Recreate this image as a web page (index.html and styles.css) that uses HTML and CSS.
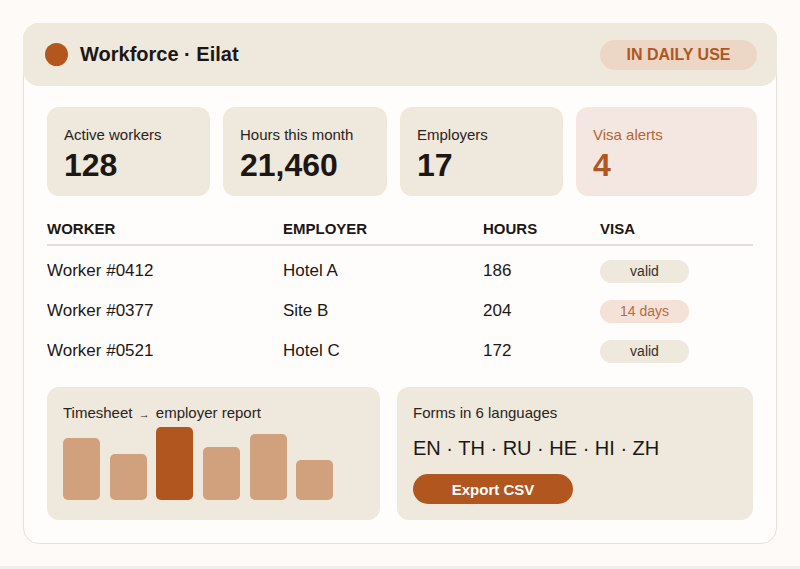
FILE: index.html
```html
<!DOCTYPE html>
<html lang="en">
<head>
    <meta charset="UTF-8">
    <meta name="viewport" content="width=device-width, initial-scale=1.0">
    <title>Workforce · Eilat</title>
    <link rel="stylesheet" href="styles.css">
</head>
<body>
    <div class="card">
        <div class="header">
            <span class="dot"></span>
            <h1>Workforce · Eilat</h1>
            <span class="badge">IN DAILY USE</span>
        </div>

        <div class="content">
            <div class="stats">
                <div class="stat">
                    <div class="stat-label">Active workers</div>
                    <div class="stat-value">128</div>
                </div>
                <div class="stat">
                    <div class="stat-label">Hours this month</div>
                    <div class="stat-value">21,460</div>
                </div>
                <div class="stat">
                    <div class="stat-label">Employers</div>
                    <div class="stat-value">17</div>
                </div>
                <div class="stat alert">
                    <div class="stat-label">Visa alerts</div>
                    <div class="stat-value">4</div>
                </div>
            </div>

            <div class="table">
                <div class="row head">
                    <span>Worker</span>
                    <span>Employer</span>
                    <span>Hours</span>
                    <span>Visa</span>
                </div>
                <div class="rows">
                    <div class="row">
                        <span>Worker #0412</span>
                        <span>Hotel A</span>
                        <span>186</span>
                        <span><span class="pill">valid</span></span>
                    </div>
                    <div class="row">
                        <span>Worker #0377</span>
                        <span>Site B</span>
                        <span>204</span>
                        <span><span class="pill warn">14 days</span></span>
                    </div>
                    <div class="row">
                        <span>Worker #0521</span>
                        <span>Hotel C</span>
                        <span>172</span>
                        <span><span class="pill">valid</span></span>
                    </div>
                </div>
            </div>

            <div class="panels">
                <div class="panel">
                    <div class="panel-title">Timesheet <span class="arrow">→</span> employer report</div>
                    <div class="bars">
                        <div class="bar" style="height: 62px"></div>
                        <div class="bar" style="height: 46px"></div>
                        <div class="bar active" style="height: 73px"></div>
                        <div class="bar" style="height: 53px"></div>
                        <div class="bar" style="height: 66px"></div>
                        <div class="bar" style="height: 40px"></div>
                    </div>
                </div>
                <div class="panel">
                    <div class="panel-title">Forms in 6 languages</div>
                    <div class="langs">EN · TH · RU · HE · HI · ZH</div>
                    <button class="export">Export CSV</button>
                </div>
            </div>
        </div>
    </div>
</body>
</html>
```

FILE: styles.css
```css
html {
    background: #f1eeeb;
}
body {
    font-family: 'Liberation Sans', Arial, sans-serif;
    background: #fdfaf7;
    color: #1c1714;
    margin: 0;
    padding: 23px 23px 0;
    height: 566px;
    box-sizing: border-box;
}
.card {
    background: #fffdfb;
    border: 1px solid #e6e0da;
    border-radius: 16px;
}
.header {
    display: flex;
    align-items: center;
    height: 63px;
    margin: -1px -1px 0;
    padding: 0 20px 0 22px;
    background: #efe8dd;
    border-radius: 16px;
}
.dot {
    width: 23px;
    height: 23px;
    border-radius: 50%;
    background: #b3571e;
    margin-right: 12px;
}
.header h1 {
    font-size: 20px;
    font-weight: bold;
    margin: 0;
    flex: 1;
}
.badge {
    width: 157px;
    height: 30px;
    line-height: 30px;
    text-align: center;
    border-radius: 15px;
    background: #ecd6c6;
    color: #b0561e;
    font-size: 16px;
    font-weight: bold;
}
.content {
    padding: 21px 23px 23px;
}
.stats {
    display: grid;
    grid-template-columns: 163fr 164fr 163fr 181fr;
    gap: 13px;
    margin-right: -4px;
}
.stat {
    background: #efe8dd;
    border-radius: 12px;
    padding: 19px 17px 13px;
}
.stat-label {
    font-size: 15px;
    line-height: 17px;
    color: #2a2320;
}
.stat-value {
    font-size: 32px;
    font-weight: bold;
    line-height: 35px;
    margin-top: 5px;
}
.stat.alert {
    background: #f4e7e1;
}
.stat.alert .stat-label {
    color: #b5662f;
}
.stat.alert .stat-value {
    color: #b0561e;
}
.table {
    margin-top: 24px;
}
.row {
    display: grid;
    grid-template-columns: 236px 200px 117px auto;
    align-items: center;
    height: 40px;
    font-size: 17px;
}
.row.head {
    height: auto;
    font-size: 15px;
    line-height: 17px;
    font-weight: bold;
    text-transform: uppercase;
    padding-bottom: 7px;
    border-bottom: 2px solid #e2ddd8;
}
.rows {
    margin-top: 5px;
}
.pill {
    display: inline-block;
    width: 89px;
    height: 23px;
    line-height: 23px;
    text-align: center;
    border-radius: 12px;
    background: #efe8dd;
    color: #3a302a;
    font-size: 14px;
}
.pill.warn {
    background: #f4e1d7;
    color: #b86b3c;
}
.panels {
    display: grid;
    grid-template-columns: 333fr 356fr;
    gap: 17px;
    margin-top: 16px;
}
.panel {
    background: #efe8dd;
    border-radius: 12px;
    padding: 17px 16px 20px;
    height: 133px;
    box-sizing: border-box;
}
.panel-title {
    font-size: 15px;
    line-height: 17px;
    color: #2a2320;
}
.arrow {
    font-size: 11px;
    line-height: 0;
    margin: 0 2px;
}
.bars {
    display: flex;
    align-items: flex-end;
    gap: 9.7px;
    height: 73px;
    margin-top: 6px;
}
.bar {
    width: 37px;
    background: #d1a07c;
    border-radius: 5px;
}
.bar.active {
    background: #b0561e;
}
.langs {
    font-size: 20px;
    line-height: 23px;
    margin-top: 16px;
}
.export {
    display: block;
    margin-top: 14px;
    width: 160px;
    height: 30px;
    border: none;
    border-radius: 15px;
    background: #b0561e;
    color: #fff;
    font-family: inherit;
    font-size: 15px;
    font-weight: bold;
    cursor: pointer;
}
```
